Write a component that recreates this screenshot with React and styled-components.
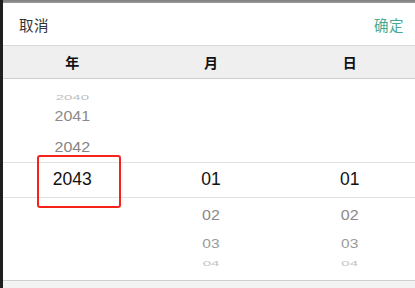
import React from 'react'
import styled, { createGlobalStyle } from 'styled-components'

const GlobalStyle = createGlobalStyle`
  html, body { margin: 0; padding: 0; background: #1e1e1e; }
  body { font-family: "Liberation Sans", "Noto Sans CJK SC", Arial, sans-serif; }
`

const Screen = styled.div`
  display: flex;
  width: 415px;
  height: 288px;
  overflow: hidden;
`

const Edge = styled.div`
  width: 3px;
  flex: none;
  background: #1e1e1e;
`

const Sheet = styled.div`
  width: 416px;
  flex: none;
  display: flex;
  flex-direction: column;
  background: #fff;
`

const Shade = styled.div`
  height: 3px;
  background: linear-gradient(#7d7d7d, #9a9a9a);
`

const Toolbar = styled.div`
  height: 42px;
  display: flex;
  align-items: center;
  justify-content: space-between;
  padding: 0 15px 0 16px;
  border-bottom: 1px solid #dadada;
  font-family: "Noto Sans CJK SC", sans-serif;
  font-size: 14.5px;
`

const Action = styled.span`
  color: ${p => (p.$primary ? '#46aa90' : '#333')};
  letter-spacing: 0.5px;
`

const Columns = styled.div`
  display: grid;
  grid-template-columns: repeat(3, 1fr);
  height: 32px;
  align-items: center;
  background: #efefef;
  border-bottom: 1px solid #cdcdcd;
  font-family: "Noto Sans CJK SC", sans-serif;
  font-size: 14px;
  font-weight: 700;
  color: #111;
  text-align: center;
`

const Wheel = styled.div`
  height: 201px;
  display: flex;
  flex-direction: column;
  border-bottom: 1px solid #cfcfcf;
`

const Band = styled.div`
  display: grid;
  grid-template-columns: repeat(3, 1fr);
  height: ${p => p.$h}px;
  box-sizing: border-box;
  border-top: ${p => (p.$selected ? '1px solid #e2e2e2' : 'none')};
  border-bottom: ${p => (p.$selected ? '1px solid #e2e2e2' : 'none')};
`

const Stack = styled.div`
  position: relative;
  display: flex;
  flex-direction: column;
  align-items: center;
  justify-content: ${p => (p.$center ? 'center' : 'flex-start')};
`

const Item = styled.div`
  height: ${p => p.$h}px;
  margin-top: ${p => p.$mt || 0}px;
  display: flex;
  align-items: center;
  font-size: ${p => p.$size}px;
  color: ${p => p.$color};
  transform: scaleY(${p => p.$sy});
  line-height: 1;
`

const Marker = styled.div`
  position: absolute;
  left: 34px;
  top: -8px;
  width: 84px;
  height: 53px;
  box-sizing: border-box;
  border: 2px solid #f5231c;
  border-radius: 3px;
`

const Footer = styled.div`
  flex: 1;
  background: #f3f3f3;
`

const upperYears = [
  { v: '2040', h: 20, mt: 8, sy: 0.5, color: '#bdbdbd', size: 15 },
  { v: '2041', h: 20, mt: 0, sy: 0.88, color: '#8a8a8a', size: 16 },
  { v: '2042', h: 30, mt: 5, sy: 0.95, color: '#858585', size: 16 },
]

const lower = [
  { v: '02', h: 34, sy: 0.92, color: '#8a8a8a', size: 16 },
  { v: '03', h: 23, sy: 0.82, color: '#9a9a9a', size: 15.5 },
  { v: '04', h: 16, sy: 0.45, color: '#c4c4c4', size: 15 },
]

const renderItems = list =>
  list.map(it => (
    <Item key={it.v} $h={it.h} $mt={it.mt} $sy={it.sy} $color={it.color} $size={it.size}>
      {it.v}
    </Item>
  ))

export default function App() {
  return (
    <>
      <GlobalStyle />
      <Screen>
        <Edge />
        <Sheet>
          <Shade />
          <Toolbar>
            <Action>取消</Action>
            <Action $primary>确定</Action>
          </Toolbar>
          <Columns>
            <span>年</span>
            <span>月</span>
            <span>日</span>
          </Columns>
          <Wheel>
            <Band $h={83}>
              <Stack>{renderItems(upperYears)}</Stack>
              <Stack />
              <Stack />
            </Band>
            <Band $h={36} $selected>
              <Stack $center>
                <Item $h={34} $sy={1} $color="#111" $size={17.5}>2043</Item>
                <Marker />
              </Stack>
              <Stack $center>
                <Item $h={34} $sy={1} $color="#111" $size={17.5}>01</Item>
              </Stack>
              <Stack $center>
                <Item $h={34} $sy={1} $color="#111" $size={17.5}>01</Item>
              </Stack>
            </Band>
            <Band $h={82}>
              <Stack />
              <Stack>{renderItems(lower)}</Stack>
              <Stack>{renderItems(lower)}</Stack>
            </Band>
          </Wheel>
          <Footer />
        </Sheet>
      </Screen>
    </>
  )
}
